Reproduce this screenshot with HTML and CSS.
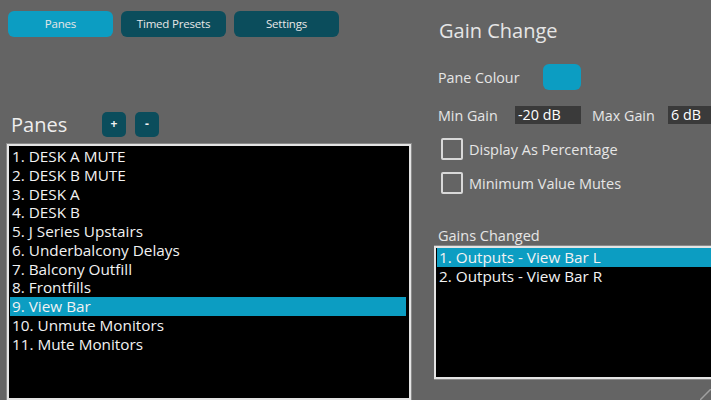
FILE: index.html
```html
<!DOCTYPE html>
<html lang="en">
<head>
    <meta charset="UTF-8">
    <title>Gain Change</title>
    <link rel="stylesheet" href="styles.css">
</head>
<body>
    <div class="app">
        <div class="left">
            <div class="tabs">
                <div class="tab active">Panes</div>
                <div class="tab">Timed Presets</div>
                <div class="tab">Settings</div>
            </div>
            <div class="panes-head">
                <div class="panes-title">Panes</div>
                <div class="mini-btn">+</div>
                <div class="mini-btn">-</div>
            </div>
            <div class="list pane-list">
                <div class="item">1. DESK A MUTE</div>
                <div class="item">2. DESK B MUTE</div>
                <div class="item">3. DESK A</div>
                <div class="item">4. DESK B</div>
                <div class="item">5. J Series Upstairs</div>
                <div class="item">6. Underbalcony Delays</div>
                <div class="item">7. Balcony Outfill</div>
                <div class="item">8. Frontfills</div>
                <div class="item selected">9. View Bar</div>
                <div class="item">10. Unmute Monitors</div>
                <div class="item">11. Mute Monitors</div>
            </div>
        </div>
        <div class="right">
            <div class="section-title">Gain Change</div>
            <div class="row colour-row">
                <span class="label">Pane Colour</span>
                <span class="swatch"></span>
            </div>
            <div class="row gain-row">
                <span class="label">Min Gain</span>
                <span class="field">-20 dB</span>
                <span class="label max-label">Max Gain</span>
                <span class="field short">6 dB</span>
            </div>
            <div class="check first">
                <span class="box"></span>
                <span>Display As Percentage</span>
            </div>
            <div class="check">
                <span class="box"></span>
                <span>Minimum Value Mutes</span>
            </div>
            <div class="caption">Gains Changed</div>
            <div class="list gains-list">
                <div class="item selected">1. Outputs - View Bar L</div>
                <div class="item">2. Outputs - View Bar R</div>
            </div>
            <div class="grip">
                <svg width="11" height="11" viewBox="0 0 11 11"><path d="M0 11 L11 0" stroke="#a0a0a0" stroke-width="1.5"/></svg>
            </div>
        </div>
    </div>
</body>
</html>
```

FILE: styles.css
```css
body {
    margin: 0;
    width: 711px;
    height: 400px;
    overflow: hidden;
    background-color: #646464;
    font-family: "Open Sans", "Noto Sans", sans-serif;
    color: #f2f2f2;
}

.app {
    display: flex;
    height: 400px;
}

.left {
    flex: 0 0 427px;
    padding-left: 7px;
    display: flex;
    flex-direction: column;
}

.tabs {
    display: flex;
    gap: 8px;
    margin: 11px 0 0 1px;
}

.tab {
    width: 105px;
    height: 26px;
    line-height: 26px;
    border-radius: 6px;
    background-color: #0b4d5c;
    text-align: center;
    font-size: 11.5px;
    color: #e8e8e8;
    letter-spacing: -0.2px;
}

    .tab.active {
        background-color: #0c9dc2;
    }

.panes-head {
    display: flex;
    align-items: center;
    margin-top: 75px;
    height: 25px;
}

.panes-title {
    font-size: 20px;
    width: 91px;
    padding-left: 4px;
    color: #eeeeee;
}

.mini-btn {
    width: 24px;
    height: 25px;
    line-height: 24px;
    margin-right: 9px;
    border-radius: 5px;
    background-color: #0b4d5c;
    text-align: center;
    font-size: 12px;
    font-weight: bold;
}

.list {
    background-color: #000;
    border: 2px solid #e4e4e4;
    box-shadow: 0 0 0 1px #8a8a8a;
    font-size: 15.3px;
}

.pane-list {
    width: 399px;
    height: 270px;
    margin-top: 7px;
    padding: 1px 0 0 1px;
}

.item {
    height: 18.75px;
    line-height: 18.75px;
    padding-left: 2px;
    white-space: nowrap;
}

.pane-list .item {
    margin-right: 3px;
}

.item.selected {
    background-color: #0c9dc2;
}

.right {
    flex: 1;
    display: flex;
    flex-direction: column;
    position: relative;
    overflow: hidden;
}

.section-title {
    margin: 17px 0 0 5px;
    height: 27px;
    line-height: 27px;
    font-size: 20px;
    color: #e6e6e6;
}

.row {
    display: flex;
    align-items: center;
    font-size: 14.3px;
    padding-left: 4px;
    color: #e6e6e6;
}

.colour-row {
    margin-top: 20px;
    height: 26px;
}

    .colour-row .label {
        width: 105px;
    }

.swatch {
    width: 38px;
    height: 26px;
    border-radius: 6px;
    background-color: #0c9dc2;
}

.gain-row {
    margin-top: 16px;
    height: 18px;
}

    .gain-row .label {
        flex: 0 0 77px;
    }

    .gain-row .max-label {
        flex: 0 0 76px;
        margin-left: 11px;
    }

.field {
    flex: 0 0 auto;
    width: 63px;
    height: 18px;
    line-height: 18px;
    padding-left: 3px;
    background-color: #3a3a3a;
    color: #ffffff;
}

    .field.short {
        width: 45px;
    }

.check {
    display: flex;
    align-items: center;
    gap: 6px;
    height: 22px;
    margin: 12px 0 0 7px;
    font-size: 14.5px;
    color: #e6e6e6;
}

    .check.first {
        margin-top: 14px;
    }

.check .box {
    width: 18px;
    height: 18px;
    border: 2px solid #d8d8d8;
    border-radius: 2px;
    background-color: #646464;
}

.caption {
    margin: 33px 0 0 4px;
    height: 18px;
    line-height: 18px;
    font-size: 14.5px;
    color: #e6e6e6;
}

.gains-list {
    margin-top: 1px;
    height: 129px;
    width: 290px;
    padding: 0 0 0 1px;
}

.grip {
    position: absolute;
    right: 0;
    bottom: 0;
    line-height: 0;
}
```
